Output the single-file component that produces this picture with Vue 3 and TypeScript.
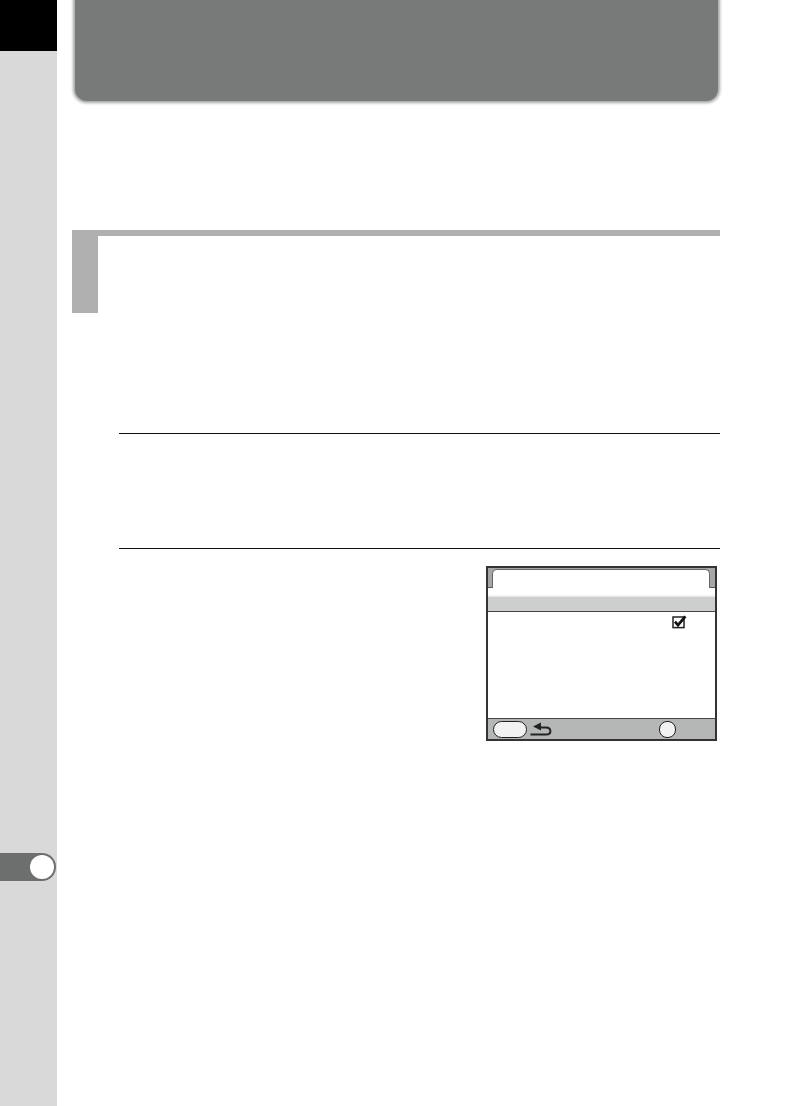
<script setup lang="ts">
</script>

<template>
  <div class="page">
    <aside class="side">
      <div class="tab-black"></div>
      <div class="marker"><span class="dot"></span></div>
    </aside>
    <main class="main">
      <div class="banner"></div>
      <section class="section">
        <div class="section-block"></div>
      </section>
      <div class="rule rule-first"></div>
      <div class="rule rule-second"></div>
      <div class="screen">
        <div class="screen-head">
          <div class="screen-tab"></div>
        </div>
        <div class="screen-gap"></div>
        <div class="screen-band"></div>
        <div class="screen-body">
          <div class="screen-row">
            <svg class="check" viewBox="0 0 15 14" width="15" height="14">
              <rect x="1" y="2" width="11" height="10.6" fill="#fff" stroke="#222" stroke-width="1.5" />
              <path d="M3 6.6 L6 10.2 L13.4 1.4" fill="none" stroke="#111" stroke-width="2.7" />
            </svg>
          </div>
        </div>
        <div class="screen-foot">
          <span class="pill"></span>
          <svg class="back" viewBox="0 0 22 14" width="22" height="14">
            <path d="M0.5 12.6 H16 Q20.4 12.6 20.4 9.2 Q20.4 5.4 16 5.4 H8" fill="none" stroke="#222" stroke-width="2" />
            <path d="M11 0.6 L3 4.6 L11 8.6 Z" fill="#222" />
          </svg>
          <span class="round"></span>
        </div>
      </div>
    </main>
  </div>
</template>

<style>
body {
  margin: 0;
  background: #fff;
}
</style>

<style scoped>
.page {
  display: flex;
  width: 794px;
  height: 1106px;
  overflow: hidden;
  background: #fff;
  font-family: "Liberation Sans", sans-serif;
}
.side {
  width: 57px;
  flex: none;
  background: #d9d9d9;
}
.tab-black {
  height: 51px;
  background: #000;
}
.marker {
  display: flex;
  align-items: center;
  justify-content: flex-end;
  box-sizing: border-box;
  width: 56px;
  height: 28px;
  margin-top: 802px;
  padding-right: 2px;
  background: #6d6e6e;
  border-radius: 0 14px 14px 0;
}
.dot {
  width: 24px;
  height: 24px;
  border-radius: 50%;
  background: #fff;
}
.main {
  flex: 1;
  min-width: 0;
  display: flex;
  flex-direction: column;
  padding-left: 15px;
}
.banner {
  width: 643px;
  height: 101px;
  margin: 0 0 3px 3px;
  background: #787979;
  border-radius: 0 0 12px 12px;
  box-shadow: 0 0 3px 1.5px #a4a5a5;
}
.section {
  width: 648px;
  margin-top: 126px;
  border-top: 6px solid #b0b0b0;
}
.section-block {
  width: 26px;
  height: 77px;
  background: #b0b0b0;
}
.rule {
  width: 601px;
  height: 1px;
  margin-left: 47px;
  background: #111;
}
.rule-first {
  margin-top: 120px;
}
.rule-second {
  margin-top: 114px;
}
.screen {
  box-sizing: border-box;
  display: flex;
  flex-direction: column;
  width: 231px;
  height: 175px;
  margin-top: 17px;
  margin-left: 414px;
  border: 2px solid #333;
  background: #fff;
}
.screen-head {
  box-sizing: border-box;
  height: 20px;
  flex: none;
  padding-top: 1px;
  background: #a6a6a6;
  border-bottom: 1px solid #555;
}
.screen-tab {
  box-sizing: border-box;
  height: 20px;
  margin: 0 5px 0 4px;
  background: #fff;
  border: 1.5px solid #666;
  border-bottom: 0;
  border-radius: 5px 5px 0 0;
}
.screen-gap {
  height: 9px;
  flex: none;
  background: linear-gradient(#fff 70%, #e4e4e4);
}
.screen-band {
  height: 14px;
  flex: none;
  background: #cdcece;
  border-bottom: 1px solid #444;
}
.screen-body {
  flex: 1;
  min-height: 0;
}
.screen-row {
  display: flex;
  justify-content: flex-end;
  padding: 3px 28px 0 0;
}
.check {
  display: block;
}
.screen-foot {
  box-sizing: border-box;
  display: flex;
  align-items: center;
  height: 21px;
  flex: none;
  padding-left: 5px;
  background: #b5b6b6;
  border-top: 1px solid #444;
}
.pill {
  width: 34px;
  height: 17px;
  box-sizing: border-box;
  border: 1.4px solid #222;
  border-radius: 8.5px;
  background: #f2f2f2;
}
.back {
  display: block;
  margin-left: 3px;
}
.round {
  width: 17px;
  height: 17px;
  box-sizing: border-box;
  margin-left: 107px;
  border: 1.4px solid #222;
  border-radius: 8px;
  background: #f2f2f2;
}
</style>
